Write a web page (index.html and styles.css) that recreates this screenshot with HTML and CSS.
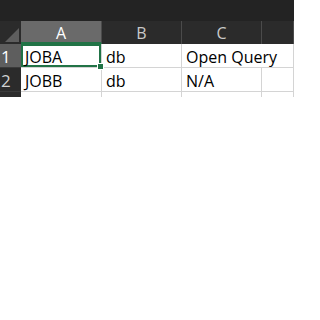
FILE: index.html
```html
<!DOCTYPE html>
<html lang="en">
<head>
<meta charset="utf-8">
<title>Sheet</title>
<link rel="stylesheet" href="styles.css">
</head>
<body>
<div class="sheet">
  <div class="topbar"></div>
  <div class="grid">
    <div class="corner">
      <svg width="21" height="23" viewBox="0 0 21 23"><polygon points="19,7 19,21 5,21" fill="#5e5e5e"/></svg>
    </div>
    <div class="col-head sel">A</div>
    <div class="col-head">B</div>
    <div class="col-head">C</div>
    <div class="col-head"></div>

    <div class="row-head sel">1</div>
    <div class="cell active">JOBA<span class="handle"></span></div>
    <div class="cell">db</div>
    <div class="cell wide">Open Query</div>

    <div class="row-head">2</div>
    <div class="cell">JOBB</div>
    <div class="cell">db</div>
    <div class="cell">N/A</div>
    <div class="cell"></div>

    <div class="row-head"></div>
    <div class="cell"></div>
    <div class="cell"></div>
    <div class="cell"></div>
    <div class="cell"></div>
  </div>
</div>
</body>
</html>
```

FILE: styles.css
```css
body {
  margin: 0;
  background: #fff;
  font-family: "Open Sans", "Noto Sans", sans-serif;
}
.sheet {
  width: 294px;
  height: 97px;
  overflow: hidden;
  background: #232323;
}
.topbar {
  height: 21px;
  background: #232323;
}
.grid {
  display: grid;
  grid-template-columns: 21px 81px 80px 80px 32px;
  grid-template-rows: 23px 24px 24px 24px;
}
.corner {
  background: #2b2b2b;
}
.corner svg {
  display: block;
}
.col-head {
  background: #2b2b2b;
  color: #c9c9c9;
  font-size: 16px;
  line-height: 24px;
  text-align: center;
  border-right: 1px solid #4b4b4b;
  box-sizing: border-box;
}
.col-head.sel {
  background: #6a6a6a;
  color: #fff;
  border-bottom: 2px solid #217346;
}
.row-head {
  background: #2b2b2b;
  color: #d2d2d2;
  font-size: 17px;
  line-height: 25px;
  padding-left: 1px;
  border-bottom: 1px solid #3a3a3a;
}
.row-head.sel {
  background: #5e5e5e;
  color: #fff;
}
.cell {
  position: relative;
  background: #fff;
  color: #000;
  font-size: 16px;
  line-height: 26px;
  padding-left: 4px;
  border-right: 1px solid #d4d4d4;
  border-bottom: 1px solid #d4d4d4;
  white-space: nowrap;
  overflow: hidden;
}
.cell.wide {
  grid-column: span 2;
}
.cell.active {
  overflow: visible;
  box-shadow: inset 0 0 0 2px #217346;
}
.handle {
  position: absolute;
  right: -3px;
  bottom: -3px;
  width: 5px;
  height: 5px;
  background: #217346;
  border: 1px solid #fff;
  z-index: 1;
}
```
